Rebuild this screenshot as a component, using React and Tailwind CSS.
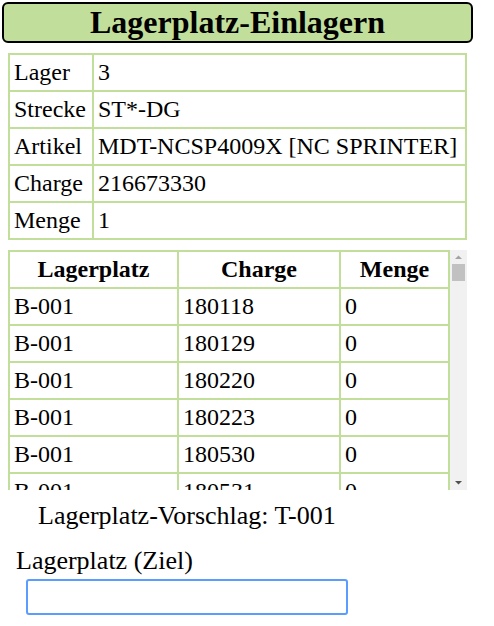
import React from "react";

const info = [
  ["Lager", "3"],
  ["Strecke", "ST*-DG"],
  ["Artikel", "MDT-NCSP4009X [NC SPRINTER]"],
  ["Charge", "216673330"],
  ["Menge", "1"],
];

const plaetze = [
  ["B-001", "180118", "0"],
  ["B-001", "180129", "0"],
  ["B-001", "180220", "0"],
  ["B-001", "180223", "0"],
  ["B-001", "180530", "0"],
  ["B-001", "180531", "0"],
];

const cell = "border-2 border-[#c2de9b] px-[4px] py-[4px]";

const App = () => {
  return (
    <div className="font-[Liberation_Serif,Times_New_Roman,serif] text-[24px] leading-[27px] text-black bg-white min-h-[626px] pt-[2px]">
      <h1 className="ml-[2px] w-[471px] h-[41px] bg-[#c2de9b] border-2 border-black rounded-md text-center text-[32px] font-bold leading-[36px]">
        Lagerplatz-Einlagern
      </h1>

      <table className="mt-[10px] ml-[8px] w-[459px] border-collapse border-2 border-[#c2de9b]">
        <tbody>
          {info.map(([label, value]) => (
            <tr key={label}>
              <td className={`w-[84px] whitespace-nowrap ${cell}`}>{label}</td>
              <td className={`whitespace-nowrap ${cell}`}>{value}</td>
            </tr>
          ))}
        </tbody>
      </table>

      <div className="mt-[10px] ml-[8px] w-[459px] h-[240px] flex">
        <div className="flex-1 overflow-hidden">
          <table className="w-full border-collapse border-2 border-[#c2de9b]">
            <thead>
              <tr>
                <th className={`w-[169px] font-bold ${cell}`}>Lagerplatz</th>
                <th className={`w-[162px] font-bold ${cell}`}>Charge</th>
                <th className={`font-bold ${cell}`}>Menge</th>
              </tr>
            </thead>
            <tbody>
              {plaetze.map(([platz, charge, menge], i) => (
                <tr key={i}>
                  <td className={cell}>{platz}</td>
                  <td className={cell}>{charge}</td>
                  <td className={cell}>{menge}</td>
                </tr>
              ))}
            </tbody>
          </table>
        </div>
        {/* scrollbar */}
        <div className="w-[17px] bg-[#f1f1f1] flex flex-col items-center">
          <svg width="17" height="14" viewBox="0 0 17 14" className="shrink-0">
            <path d="M5 9 L8.5 5.5 L12 9 Z" fill="#a3a3a3" />
          </svg>
          <div className="w-[13px] h-[17px] bg-[#c1c1c1]" />
          <div className="flex-1" />
          <svg width="17" height="14" viewBox="0 0 17 14" className="shrink-0">
            <path d="M5 5 L8.5 8.5 L12 5 Z" fill="#505050" />
          </svg>
        </div>
      </div>

      <p className="mt-[11px] ml-[38px] text-[26px] leading-[30px]">Lagerplatz-Vorschlag: T-001</p>

      <label className="block mt-[15px] ml-[16px] text-[26px] leading-[30px]">Lagerplatz (Ziel)</label>
      <input
        autoFocus
        type="text"
        className="block mt-[3px] ml-[26px] w-[322px] h-[36px] border-2 border-[#5b9dff] rounded-[3px] outline-none px-1 text-[24px]"
      />
    </div>
  );
};

export default App;
